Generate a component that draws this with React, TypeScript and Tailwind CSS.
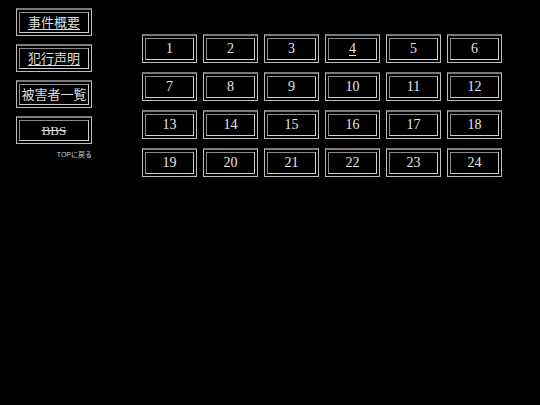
import React from "react";

type BoxProps = { w: string; h: string; children: React.ReactNode };

// Double-ruled frame: outer raised border, thin black gap, inner sunken border
function Frame({ w, h, children }: BoxProps) {
  return (
    <div
      className={`${w} ${h} flex border-t-2 border-l border-r border-b border-t-[#7a7a7a] border-l-[#bdbdbd] border-r-[#bdbdbd] border-b-[#bdbdbd] p-[2px]`}
    >
      <div className="flex-1 flex items-center justify-center border border-t-[#8a8a8a] border-l-[#8a8a8a] border-r-[#d0d0d0] border-b-[#d0d0d0]">
        {children}
      </div>
    </div>
  );
}

const menu: { label: string; deco: string }[] = [
  { label: "事件概要", deco: "underline" },
  { label: "犯行声明", deco: "underline" },
  { label: "被害者一覧", deco: "" },
  { label: "BBS", deco: "line-through" },
];

const pages = Array.from({ length: 24 }, (_, i) => i + 1);

export default function App() {
  return (
    <div
      className="w-[540px] h-[405px] bg-black text-[#e6e6e6] flex"
      style={{ fontFamily: '"Liberation Serif", "Noto Sans CJK JP", serif' }}
    >
      <nav className="pl-[16px] pt-[8px] flex flex-col">
        <div className="flex flex-col gap-[8px]">
          {menu.map((m) => (
            <Frame key={m.label} w="w-[76px]" h="h-[28px]">
              <span className={`text-[13px] leading-none text-[#dcdcdc] ${m.deco} underline-offset-2`}>
                {m.label}
              </span>
            </Frame>
          ))}
        </div>
        <div
          className="mt-[7px] self-end text-[7px] leading-none text-[#cfcfcf]"
          style={{ fontFamily: '"Liberation Sans", "Noto Sans CJK JP", sans-serif' }}
        >
          TOPに戻る
        </div>
      </nav>

      <main className="ml-[50px] pt-[34px]">
        <div className="grid grid-cols-[repeat(6,55px)] gap-x-[6px] gap-y-[9px]">
          {pages.map((n) => (
            <Frame key={n} w="w-[55px]" h="h-[29px]">
              <span className={`text-[14px] leading-none ${n === 4 ? "underline underline-offset-2" : ""}`}>
                {n}
              </span>
            </Frame>
          ))}
        </div>
      </main>
    </div>
  );
}
